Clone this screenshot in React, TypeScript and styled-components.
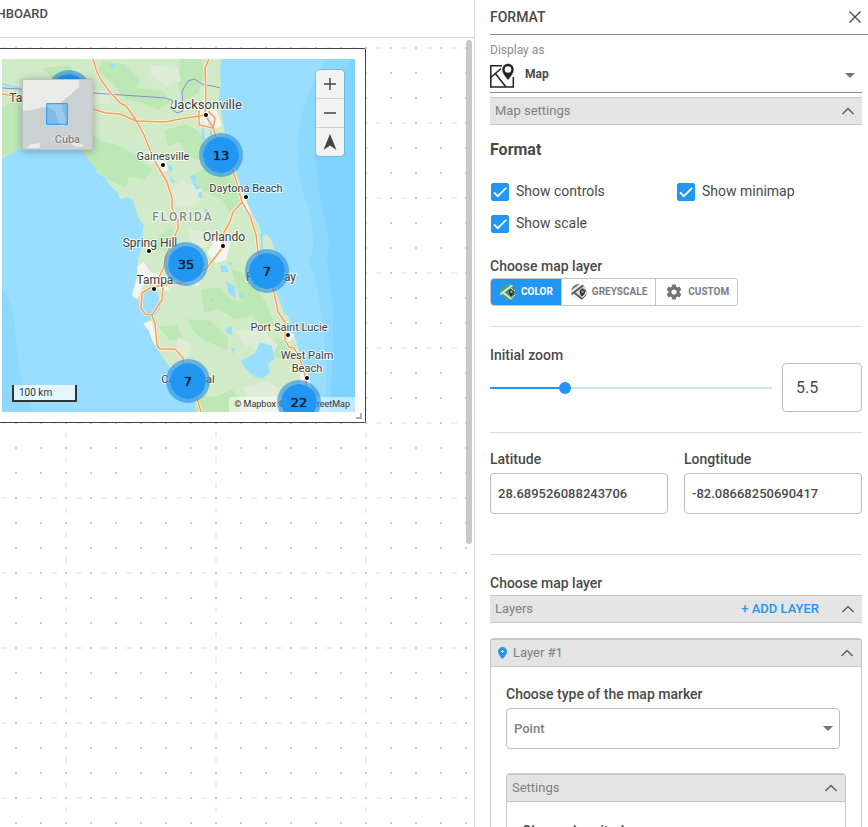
import React, { useState } from "react";
import styled, { createGlobalStyle } from "styled-components";

const GlobalStyle = createGlobalStyle`
  * { box-sizing: border-box; }
  body { margin: 0; background: #fff; color: #4a4a4a; font-family: Roboto, "Liberation Sans", sans-serif; font-size: 14px; }
  button, input, select { font-family: inherit; color: inherit; margin: 0; }
  svg { display: block; flex: none; }
`;

const Page = styled.div`
  display: flex;
  height: 100vh;
  overflow: hidden;
`;

const Workspace = styled.main`
  flex: 1;
  min-width: 0;
  display: flex;
  flex-direction: column;
`;

const TopBar = styled.header`
  height: 38px;
  flex: none;
  border-bottom: 1px solid #d6d6d6;
`;

const Crumb = styled.div`
  width: 48px;
  height: 26px;
  display: flex;
  justify-content: flex-end;
  align-items: center;
  overflow: hidden;
  font-size: 13px;
  font-weight: 500;
`;

const Canvas = styled.div`
  position: relative;
  flex: 1;
  min-height: 0;
  overflow: hidden;
  padding-top: 10px;
  background:
    conic-gradient(from 90deg at 23px 23px, #ccc 90deg, transparent 0) -8px -14px / 25px 25px,
    conic-gradient(from 90deg at 148px 19px, #f0f0f0 90deg, transparent 0) -83px 0 / 150px 25px,
    conic-gradient(from 90deg at 19px 73px, #f0f0f0 90deg, transparent 0) -18px -64px / 25px 75px;
`;

const Widget = styled.section`
  position: relative;
  width: 366px;
  max-width: 100%;
  border: 1px solid #444;
  border-left: 0;
  border-radius: 0 2px 2px 0;
  padding: 10px 10px 10px 2px;
  background: #fff;
`;

const ResizeHandle = styled.span`
  position: absolute;
  right: 3px;
  bottom: 3px;
  width: 6px;
  height: 6px;
  border: solid #b0b0b0;
  border-width: 0 2px 2px 0;
`;

const MapView = styled.div`
  position: relative;
  aspect-ratio: 1;
  overflow: hidden;
  > svg { width: 100%; height: 100%; }
`;

const Cluster = styled.button<{ $x: number; $y: number }>`
  position: absolute;
  left: ${(p) => p.$x}px;
  top: ${(p) => p.$y}px;
  width: 44px;
  height: 44px;
  transform: translate(-50%, -50%);
  padding: 0;
  border: 4px solid rgba(33, 138, 225, 0.6);
  border-radius: 50%;
  background: #2196f3;
  background-clip: padding-box;
  font: 13px "DejaVu Sans", sans-serif;
  color: #0c1c2c;
  text-shadow: 0 0 1px #0c1c2c;
`;

const MiniMap = styled.div`
  position: absolute;
  left: 20px;
  top: 20px;
  width: 71px;
  height: 71px;
  box-shadow: 0 1px 8px rgba(0, 0, 0, 0.3);
  border: 1px solid #bfc3c6;
  > svg { width: 100%; height: 100%; }
`;

const MapControls = styled.div`
  position: absolute;
  top: 11px;
  right: 11px;
  width: 28px;
  border-radius: 4px;
  overflow: hidden;
  background: #f2f2f2;
  box-shadow: 0 0 0 1px rgba(0, 0, 0, 0.12);
`;

const MapButton = styled.button`
  display: grid;
  place-items: center;
  width: 100%;
  height: 28px;
  padding: 0;
  border: 0;
  background: transparent;
  & + & { height: 29px; border-top: 1px solid #d0d0d0; }
`;

const Scale = styled.div`
  position: absolute;
  left: 10px;
  bottom: 10px;
  width: 65px;
  height: 17px;
  padding-left: 5px;
  border: 2px solid #333;
  border-top: 0;
  background: rgba(255, 255, 255, 0.75);
  font-size: 10px;
  line-height: 15px;
  color: #333;
`;

const Attribution = styled.div`
  position: absolute;
  right: 0;
  bottom: 0;
  height: 15px;
  padding: 0 5px;
  background: rgba(255, 255, 255, 0.5);
  font-size: 9px;
  line-height: 15px;
  white-space: nowrap;
  color: #333;
`;

const ScrollThumb = styled.div`
  position: absolute;
  top: 2px;
  right: 2px;
  width: 6px;
  height: 504px;
  border-radius: 3px;
  background: #c8c8c8;
`;

const Panel = styled.aside`
  width: 394px;
  flex: none;
  border-left: 1px solid #e0e0e0;
  padding-left: 15px;
  overflow: hidden;
`;

const PanelHeader = styled.header`
  display: flex;
  align-items: center;
  justify-content: space-between;
  height: 35px;
  padding-right: 6px;
  border-bottom: 1px solid #8c8c8c;
`;

const PanelTitle = styled.h1`
  margin: 0;
  font-size: 14px;
  font-weight: 500;
  line-height: 20px;
`;

const IconButton = styled.button`
  display: grid;
  place-items: center;
  padding: 0;
  border: 0;
  background: none;
`;

const PanelBody = styled.div`
  padding: 7px 6px 0 0;
`;

const SmallLabel = styled.label`
  display: block;
  font-size: 12px;
  line-height: 16px;
  color: #8e8e8e;
`;

const DisplayRow = styled.div`
  display: flex;
  align-items: center;
  gap: 2px;
  height: 35px;
  padding: 1px 6px 0 0;
  border-bottom: 1px solid #8c8c8c;
`;

const DisplaySelect = styled.select`
  appearance: none;
  flex: 1;
  height: 32px;
  padding: 0 8px 3px;
  border: 0;
  background: none;
  font-size: 12px;
  font-weight: 700;
`;

const Bar = styled.div<{ $top: number }>`
  display: flex;
  align-items: center;
  height: 28px;
  margin-top: ${(p) => p.$top}px;
  padding: 0 7px 0 5px;
  border: solid #c8c8c8;
  border-width: 1px 0;
  background: #e4e4e4;
  font-size: 13px;
  color: #808080;
`;

const BarTitle = styled.span`
  flex: 1;
  padding-bottom: 2px;
`;

const AddButton = styled.button`
  margin-right: 22px;
  padding: 0 0 1px;
  border: 0;
  background: none;
  font-size: 13px;
  font-weight: 500;
  color: #2196f3;
`;

const SectionTitle = styled.h2`
  margin: 15px 0 0;
  font-size: 16px;
  font-weight: 700;
  line-height: 20px;
`;

const CheckGrid = styled.div`
  display: grid;
  grid-template-columns: 1fr 1fr;
  grid-auto-rows: 32px;
  margin-top: 15px;
`;

const CheckLabel = styled.label`
  display: flex;
  align-items: center;
  gap: 7px;
  padding-left: 1px;
  font-size: 14px;
`;

const Checkbox = styled.input.attrs({ type: "checkbox" })`
  appearance: none;
  width: 18px;
  height: 18px;
  border: 1px solid #2196f3;
  border-radius: 2px;
  background: #fff;
  && { margin-top: 2px; }
  &:checked {
    background: #2196f3 url("data:image/svg+xml,%3Csvg xmlns='http://www.w3.org/2000/svg' viewBox='0 0 16 16'%3E%3Cpath d='M2 8.4l3.8 3.8L14.2 3.8' fill='none' stroke='white' stroke-width='1.8'/%3E%3C/svg%3E") center / 16px no-repeat;
  }
`;

const FieldTitle = styled.div<{ $top: number }>`
  margin-top: ${(p) => p.$top}px;
  font-size: 14px;
  font-weight: 500;
  line-height: 20px;
`;

const Segments = styled.div`
  display: inline-flex;
  height: 28px;
  margin-top: 2px;
  border: 1px solid #c4c4c4;
  border-radius: 4px;
  overflow: hidden;
`;

const Segment = styled.button<{ $active?: boolean }>`
  display: flex;
  align-items: center;
  gap: 5px;
  padding: 0 8px 0 9px;
  border: 0;
  background: ${(p) => (p.$active ? "#2196f3" : "#fff")};
  color: ${(p) => (p.$active ? "#fff" : "#7d7d7d")};
  font-size: 10px;
  font-weight: 700;
  & + & { border-left: 1px solid #c4c4c4; }
`;

const SegmentText = styled.span`
  padding-bottom: 2px;
`;

const Block = styled.section<{ $gap: number }>`
  padding-bottom: ${(p) => p.$gap}px;
  border-bottom: 1px solid #dcdcdc;
`;

const ZoomRow = styled.div`
  display: flex;
  align-items: center;
  justify-content: space-between;
  gap: 10px;
  margin-top: -2px;
`;

const SliderSlot = styled.div`
  flex: 1;
  min-width: 0;
  display: flex;
`;

const Slider = styled.input.attrs({ type: "range" })<{ $fill: number }>`
  appearance: none;
  flex: 1;
  min-width: 0;
  height: 12px;
  && { margin: 0 -6px; }
  background: none;
  &::-webkit-slider-runnable-track {
    height: 12px;
    background:
      linear-gradient(90deg, #2196f3 ${(p) => p.$fill}%, #c3e4fc 0) center / calc(100% - 12px) 2px no-repeat;
  }
  &::-webkit-slider-thumb {
    appearance: none;
    width: 12px;
    height: 12px;
    border-radius: 50%;
    background: #2196f3;
  }
`;

const NumberBox = styled.input`
  width: 80px;
  height: 49px;
  padding: 0 13px;
  border: 1px solid #bdbdbd;
  border-radius: 4px;
  font-size: 16px;
`;

const Coordinates = styled.div`
  display: grid;
  grid-template-columns: 1fr 1fr;
  gap: 16px;
  padding-top: 16px;
`;

const CoordLabel = styled.label`
  display: flex;
  flex-direction: column;
  gap: 4px;
  font-weight: 500;
  line-height: 20px;
`;

const TextBox = styled.input`
  width: 100%;
  height: 41px;
  padding: 0 7px;
  border: 1px solid #bdbdbd;
  border-radius: 4px;
  font-size: 13px;
  font-weight: 500;
`;

const Card = styled.section<{ $top: number }>`
  margin-top: ${(p) => p.$top}px;
  border: 1px solid #c8c8c8;
  border-bottom: 0;
  border-radius: 4px 4px 0 0;
  padding-bottom: 60px;
`;

const CardHeader = styled.header<{ $lead: number }>`
  display: flex;
  align-items: center;
  gap: 6px;
  height: 28px;
  padding: 0 7px 0 ${(p) => p.$lead}px;
  border: solid #c8c8c8;
  border-width: 1px 0;
  background: #e4e4e4;
  font-size: 13px;
  color: #808080;
`;

const CardBody = styled.div`
  display: flow-root;
  padding: 0 15px;
`;

const SelectLabel = styled.label`
  display: block;
  margin-top: 17px;
  font-weight: 500;
  line-height: 20px;
`;

const SelectFrame = styled.div`
  display: flex;
  align-items: center;
  height: 41px;
  margin: 4px 6px 0 0;
  padding-right: 5px;
  border: 1px solid #bdbdbd;
  border-radius: 4px;
`;

const PointSelect = styled.select`
  appearance: none;
  flex: 1;
  height: 38px;
  padding: 0 7px;
  border: 0;
  background: none;
  font-size: 13px;
  font-weight: 500;
  color: #808080;
`;

const Caret = () => (
  <svg width="12" height="6" viewBox="0 0 12 6" aria-hidden="true"><path d="M1 0h10L6 5z" fill="#757575" /></svg>
);

const ChevronUp = () => (
  <svg width="14" height="10" viewBox="0 0 14 10" fill="none" stroke="#616161" strokeWidth="1.5" aria-hidden="true">
    <path d="M1.5 8L7 2.5 12.500 8" />
  </svg>
);

const MapIcon = () => (
  <svg width="25" height="26" viewBox="0 0 25 26" aria-hidden="true">
    <path d="M12 2.700H.8V24h22.500V14M.8 14.500L11 5.500M5.500 10.800L16 24" fill="none" stroke="#222" strokeWidth="1.500" />
    <path d="M18 .5a6 6 0 0 0-6 6c0 4.500 6 10.500 6 10.500s6-6 6-10.500a6 6 0 0 0-6-6z" fill="#222" stroke="#fff" strokeWidth=".5" />
    <circle cx="18" cy="6.500" r="3.300" fill="#fff" />
  </svg>
);

const TileIcon = ({ tone }: { tone: "color" | "grey" }) => {
  const c = tone === "color"
    ? { base: "#38a69c", road: "#f4dfae", block: "#4d8f78", edge: "#38a69c", pin: "#26363a", eye: "#8fb3a8" }
    : { base: "#f0f0f0", road: "#5e5e5e", block: "#d6d6d6", edge: "#777", pin: "#2c2c2c", eye: "#aaa" };
  return (
    <svg width="16" height="16" viewBox="0 0 16 16" aria-hidden="true">
      <clipPath id={`tile-${tone}`}><circle cx="8" cy="8" r="8" /></clipPath>
      <g clipPath={`url(#tile-${tone})`}>
        <path d="M0 0h16v16H0z" fill={c.base} />
        <path d="M5 8L13 1.500 16 5V13L12 14z" fill={c.block} />
        <path d="M0 6.500L9 0H4L0 4z" fill={c.edge} />
        <path d="M0 10.500L14 0M3 8.500L12.500 16" stroke={c.road} strokeWidth="2" fill="none" />
        <path d="M11.500 5a2.700 2.700 0 0 0-2.700 2.700c0 2.300 2 4.800 2 4.800s3.400-2.500 3.400-4.800A2.700 2.700 0 0 0 11.500 5z" fill={c.pin} />
        <circle cx="11.500" cy="7.700" r="1.200" fill={c.eye} />
        <path d="M11 15l5-5M10.500 4L15 7" stroke={c.road} strokeWidth="1" />
      </g>
    </svg>
  );
};

const GearIcon = () => (
  <svg width="18" height="18" viewBox="0 0 24 24" fill="#757575" aria-hidden="true">
    <path d="M19.430 12.980c.04-.32.07-.64.07-.98s-.03-.66-.07-.98l2.110-1.650c.19-.15.24-.42.12-.64l-2-3.460c-.12-.22-.39-.3-.61-.22l-2.490 1c-.52-.4-1.080-.73-1.690-.98l-.38-2.650C14.460 2.180 14.250 2 14 2h-4c-.25 0-.46.18-.49.42l-.38 2.650c-.61.25-1.170.59-1.690.98l-2.490-1c-.23-.09-.49 0-.61.22l-2 3.460c-.13.22-.07.49.12.64l2.110 1.650c-.04.32-.07.65-.07.98s.03.66.07.98l-2.110 1.650c-.19.15-.24.42-.12.64l2 3.460c.12.22.39.3.61.22l2.490-1c.52.4 1.080.73 1.690.98l.38 2.650c.03.24.24.42.49.42h4c.25 0 .46-.18.49-.42l.38-2.650c.61-.25 1.170-.59 1.690-.98l2.490 1c.23.09.49 0 .61-.22l2-3.460c.12-.22.07-.49-.12-.64l-2.110-1.650zM12 15.500c-1.930 0-3.500-1.570-3.500-3.500s1.570-3.500 3.500-3.500 3.500 1.570 3.500 3.500-1.570 3.500-3.500 3.500z" />
  </svg>
);

const PinIcon = () => (
  <svg width="9" height="12" viewBox="0 0 9 12" aria-hidden="true">
    <path d="M4.500 0A4.500 4.500 0 0 0 0 4.500C0 7.500 4.500 12 4.500 12S9 7.500 9 4.500A4.500 4.500 0 0 0 4.500 0z" fill="#2196f3" />
    <path d="M4.500 3v3M3 4.500h3" stroke="#fff" />
  </svg>
);

const roads = [
  "M93 59L97 72 101 80 110 92 120 103 126 106 136 120 144 135 150 150 157 165 167 182 172 198 172 208 178 220 178 229 173 240 165 257 164 267 159 277 163 285 162 300 152 315 145 314 141 308 142 293 150 288 163 285 180 283 193 278 207 268 213 260 223 247 224 232 230 222 233 212 242 202",
  "M2 94L22 97 70 106 93 109 106 113 120 114 136 121 165 122 180 119 205 115",
  "M209 59L205 68 206 95 205 115 213 127 217 140 230 163 236 180 242 202 250 216 256 235 258 252 268 278 274 292 278 312 285 322 285 340 289 347 294 348 299 357 304 370 307 390 306 412",
  "M199 110L199 125 213 128 215 118 208 111",
  "M152 315L155 324 157 345 160 349 175 349 183 358 185 375 197 398 201 412",
];

const places = [
  { name: "Jacksonville", x: 206, y: 109, size: 13, dot: [206, 115] },
  { name: "Gainesville", x: 163, y: 160, size: 11, dot: [163, 165] },
  { name: "Daytona Beach", x: 246, y: 192, size: 11, dot: [246, 197] },
  { name: "Spring Hill", x: 150, y: 247, size: 12, dot: [149, 251] },
  { name: "Orlando", x: 224, y: 241, size: 12, dot: [223, 246] },
  { name: "Tampa", x: 155, y: 284, size: 12, dot: [154, 289] },
  { name: "Port Saint Lucie", x: 289, y: 331, size: 11, dot: [288, 335] },
  { name: "West Palm", x: 307, y: 359, size: 11 },
  { name: "Beach", x: 307, y: 372, size: 11, dot: [307, 378] },
  { name: "Palm Bay", x: 271, y: 281, size: 12 },
  { name: "Cape Coral", x: 188, y: 383, size: 11 },
  { name: "Tallahassee", x: 41, y: 102, size: 12 },
];

const FloridaMap = () => (
  <svg viewBox="2 59 353 353" role="img" aria-label="Map of Florida">
    <defs>
      <clipPath id="land">
        <path d="M2 59H221L220 72 221 85 219 98 222 115 226 140 229 153 235 169 243 193 250 210 260 227 262 237 266 234 271 239 275 250 277 262 274 275 277 287 280 297 288 317 295 337 298 347 303 363 309 377 311 387 310 412H196L195 400 190 384 180 375 170 367 165 362 160 353 152 340 149 331 143 323 150 320 160 309 158 292 150 289 145 297 143 306 137 300 132 295 137 277 138 260 142 247 143 230 144 225 138 217 133 200 128 197 120 199 118 193 108 183 106 178 97 173 95 166 90 162 82 150 50 147 23 147 12 153 2 158z" />
      </clipPath>
    </defs>
    <path d="M2 59h353v353H2z" fill="#99deff" />
    <path d="M325 59Q298 110 298 140V170Q301 190 308 207 314 230 313 248L309 262 317 285 323 330 327 377 323 412H355V59z" fill="#8cd8ff" />
    <path d="M352 59Q332 85 324 115 315 140 315 157L319 190 329 240 327 263 333 310V350L330 412H355V59z" fill="#80d2ff" />
    <path d="M2 287L12 307 20 373 33 412H2z" fill="#8cd8ff" />
    <g clipPath="url(#land)">
      <path d="M2 59h353v353H2z" fill="#d1ebc8" />
      <g fill="#bee7b6">
        <path d="M2 108L18 98 24 118 45 125 85 128 100 141 118 145 135 155 152 169 145 180 129 176 126 188 108 180 90 165 80 150H20L2 156z" />
        <path d="M102 61L125 64 140 79 137 88 163 91 170 102 158 110 142 103 124 99 113 84 98 71z" />
        <path d="M180 59H202L204 76 198 93 184 101 178 86z" />
        <path d="M164 130L186 124 199 132 208 151 200 160 188 157 180 142 168 146z" />
        <path d="M206 155L226 160 236 183 241 199 230 212 222 200 202 190 192 175 204 169z" />
        <path d="M159 235L172 228 178 240 165 253 154 246z" />
        <path d="M201 290L219 287 231 299 247 303 251 316 235 319 219 309 204 313z" />
        <path d="M231 269L250 275 265 301 274 322 266 330 251 315 240 299z" />
        <path d="M187 319L211 321 228 337 227 350 205 341 193 331zM191 394L216 397 232 389 241 403 240 412H191zM276 336L293 349 293 360 278 358 269 348z" />
        <path d="M43 68L70 65 75 76 53 80zM158 326L177 325 183 338 170 341z" />
      </g>
      <g fill="#dfedd7">
        <path d="M150 65L178 68 181 81 165 86 151 75zM183 180L203 189 199 204 178 207 169 191zM178 337L192 344 189 357 175 352zM244 387L267 381 282 391 280 412H249zM234 330L263 331 278 345 272 355 245 345zM92 89L110 92 109 104 93 103z" />
        <path d="M145 150L157 153 162 160 151 164zM188 229L205 232 209 247 193 250z" />
      </g>
      <g fill="#f3f5f1">
        <path d="M198 108L216 108 222 126 212 130 199 122zM155 162L166 160 168 170 160 173zM215 240L231 241 226 260 216 263 207 253zM133 269L144 262 150 272 167 277 169 291 159 289 151 278 143 285 138 298 130 299zM144 323L152 321 157 347 151 345zM300 374L312 369 313 402 301 405zM284 328L295 335 289 342z" />
        <path d="M240 192L249 194 252 213 247 210zM181 270L203 273 198 286 187 284z" />
      </g>
      <g fill="#99deff">
        <path d="M260 342L272 346 275 359 268 364 270 373 263 378 255 377 246 369 241 361 249 356 255 353z" />
        <path d="M190 176L197 175 195 182 201 188 196 190zM205 208L209 211 205 216zM199 192L202 192 202 199 198 197zM221 265L226 266 229 272 221 272zM227 262L232 263 231 266zM226 281L235 286 236 298 229 294zM210 300L214 298 214 302zM226 328L232 327 232 335 227 333zM231 348L236 349 233 354zM238 292L244 296 242 299zM144 292L151 285 157 291 156 305 149 309 142 303zM109 63L116 65 112 69zM168 165L174 168 170 173zM170 175L176 183 171 182zM203 118L205 140 201 140z" />
      </g>
      <path d="M208 116L211 134 222 156 236 178M261 233L263 256 275 286 286 315M2 84L18 88 22 93" fill="none" stroke="#99deff" strokeWidth="2" />
    </g>
    <path d="M2 88L93 93 166 98 173 101 170 108 177 113 183 111 182 91 188 81 194 79 204 85 213 86 220 88" fill="none" stroke="#8c8fc5" />
    <g fill="none" strokeLinejoin="round">
      {roads.map((d) => <path key={d} d={d} stroke="#fff3e4" strokeWidth="3" />)}
      {roads.map((d) => <path key={d} d={d} stroke="#f3a05c" strokeWidth="1.500" />)}
    </g>
    <g fontFamily="Roboto, sans-serif" textAnchor="middle" stroke="#fff" strokeOpacity=".75" strokeWidth="2" paintOrder="stroke" fill="#3c3c3c">
      {places.map((p) => (
        <g key={p.name}>
          {p.dot && <circle cx={p.dot[0]} cy={p.dot[1]} r="2" fill="#000" />}
          <text x={p.x} y={p.y} fontSize={p.size}>{p.name}</text>
        </g>
      ))}
      <text x="183" y="221" fontSize="12" fontWeight="500" letterSpacing="2" fill="#888">FLORIDA</text>
    </g>
  </svg>
);

const clusters = [
  { count: 17, x: 67, y: 33 },
  { count: 13, x: 219, y: 96 },
  { count: 35, x: 184, y: 205 },
  { count: 7, x: 265, y: 212 },
  { count: 7, x: 186, y: 322 },
  { count: 22, x: 297, y: 343 },
];

const layers = ["Color", "Greyscale", "Custom"] as const;

export default function App() {
  const [zoom, setZoom] = useState(5.5);
  const [layer, setLayer] = useState<(typeof layers)[number]>("Color");

  return (
    <Page>
      <GlobalStyle />
      <Workspace>
        <TopBar><Crumb>DASHBOARD</Crumb></TopBar>
        <Canvas>
          <Widget>
            <MapView>
              <FloridaMap />
              <Attribution>© Mapbox © OpenStreetMap</Attribution>
              {clusters.map((c) => <Cluster key={`${c.x}-${c.y}`} $x={c.x} $y={c.y}>{c.count}</Cluster>)}
              <MiniMap>
                <svg viewBox="0 0 70 70" role="img" aria-label="Overview map">
                  <path d="M0 0h70v71H0z" fill="#c9d1d3" />
                  <path d="M0 0H57V7L48 15 39 22 40 31 43 38 43 46 38 47 34 37 32 31 25 28 18 28 11 30 6 31 0 31zM4 68L9 65 17 64 17 69H4zM27 61L36 57 48 58 58 65 63 67 54 68 44 61 35 59z" fill="#ebebe9" />
                  <path d="M24 24h21v21H24z" fill="#2196f3" fillOpacity=".4" stroke="#2196f3" />
                  <text x="45" y="64" textAnchor="middle" fontSize="11" fontWeight="500" fill="#808080" stroke="#eee" strokeWidth="1" paintOrder="stroke">Cuba</text>
                </svg>
              </MiniMap>
              <MapControls>
                <MapButton aria-label="Zoom in"><svg width="12" height="12" viewBox="0 0 12 12"><path d="M6 0v12M0 6h12" stroke="#444" strokeWidth="1.500" /></svg></MapButton>
                <MapButton aria-label="Zoom out"><svg width="12" height="12" viewBox="0 0 12 12"><path d="M0 6h12" stroke="#444" strokeWidth="1.500" /></svg></MapButton>
                <MapButton aria-label="Reset north"><svg width="14" height="16" viewBox="0 0 14 16"><path d="M7 0l6.500 16L7 11.500.5 16z" fill="#444" /></svg></MapButton>
              </MapControls>
              <Scale>100 km</Scale>
            </MapView>
            <ResizeHandle />
          </Widget>
          <ScrollThumb />
        </Canvas>
      </Workspace>

      <Panel>
        <PanelHeader>
          <PanelTitle>FORMAT</PanelTitle>
          <IconButton aria-label="Close">
            <svg width="14" height="14" viewBox="0 0 14 14"><path d="M1.500 1.500l11 11M12.500 1.500l-11 11" stroke="#444" strokeWidth="1.300" /></svg>
          </IconButton>
        </PanelHeader>
        <PanelBody>
          <SmallLabel htmlFor="display">Display as</SmallLabel>
          <DisplayRow>
            <MapIcon />
            <DisplaySelect id="display"><option>Map</option></DisplaySelect>
            <Caret />
          </DisplayRow>
          <Bar $top={4}>
            <BarTitle>Map settings</BarTitle>
            <IconButton aria-label="Collapse map settings"><ChevronUp /></IconButton>
          </Bar>

          <Block $gap={20}>
            <SectionTitle>Format</SectionTitle>
            <CheckGrid>
              <CheckLabel><Checkbox defaultChecked />Show controls</CheckLabel>
              <CheckLabel><Checkbox defaultChecked />Show minimap</CheckLabel>
              <CheckLabel><Checkbox defaultChecked />Show scale</CheckLabel>
            </CheckGrid>
            <FieldTitle $top={17}>Choose map layer</FieldTitle>
            <Segments>
              {layers.map((name) => (
                <Segment key={name} $active={layer === name} onClick={() => setLayer(name)}>
                  {name === "Custom" ? <GearIcon /> : <TileIcon tone={name === "Color" ? "color" : "grey"} />}
                  <SegmentText>{name.toUpperCase()}</SegmentText>
                </Segment>
              ))}
            </Segments>
          </Block>

          <Block $gap={20}>
            <FieldTitle $top={18}>Initial zoom</FieldTitle>
            <ZoomRow>
              <SliderSlot>
                <Slider aria-label="Initial zoom" min={1} max={18} step={0.5} value={zoom} $fill={((zoom - 1) / 17) * 100} onChange={(e) => setZoom(Number(e.target.value))} />
              </SliderSlot>
              <NumberBox aria-label="Zoom value" value={zoom} onChange={(e) => setZoom(Number(e.target.value) || 1)} />
            </ZoomRow>
          </Block>

          <Block $gap={40}>
            <Coordinates>
              <CoordLabel>Latitude<TextBox defaultValue="28.689526088243706" /></CoordLabel>
              <CoordLabel>Longtitude<TextBox defaultValue="-82.08668250690417" /></CoordLabel>
            </Coordinates>
          </Block>

          <FieldTitle $top={18}>Choose map layer</FieldTitle>
          <Bar $top={2}>
            <BarTitle>Layers</BarTitle>
            <AddButton>+ ADD LAYER</AddButton>
            <IconButton aria-label="Collapse layers"><ChevronUp /></IconButton>
          </Bar>

          <Card $top={15}>
            <CardHeader $lead={7}>
              <PinIcon />
              <BarTitle>Layer #1</BarTitle>
              <IconButton aria-label="Collapse layer"><ChevronUp /></IconButton>
            </CardHeader>
            <CardBody>
              <SelectLabel htmlFor="marker">Choose type of the map marker</SelectLabel>
              <SelectFrame>
                <PointSelect id="marker"><option>Point</option></PointSelect>
                <Caret />
              </SelectFrame>
              <Card $top={24}>
                <CardHeader $lead={5}>
                  <BarTitle>Settings</BarTitle>
                  <IconButton aria-label="Collapse settings"><ChevronUp /></IconButton>
                </CardHeader>
                <CardBody>
                  <FieldTitle $top={19}>Choose longitude</FieldTitle>
                </CardBody>
              </Card>
            </CardBody>
          </Card>
        </PanelBody>
      </Panel>
    </Page>
  );
}
